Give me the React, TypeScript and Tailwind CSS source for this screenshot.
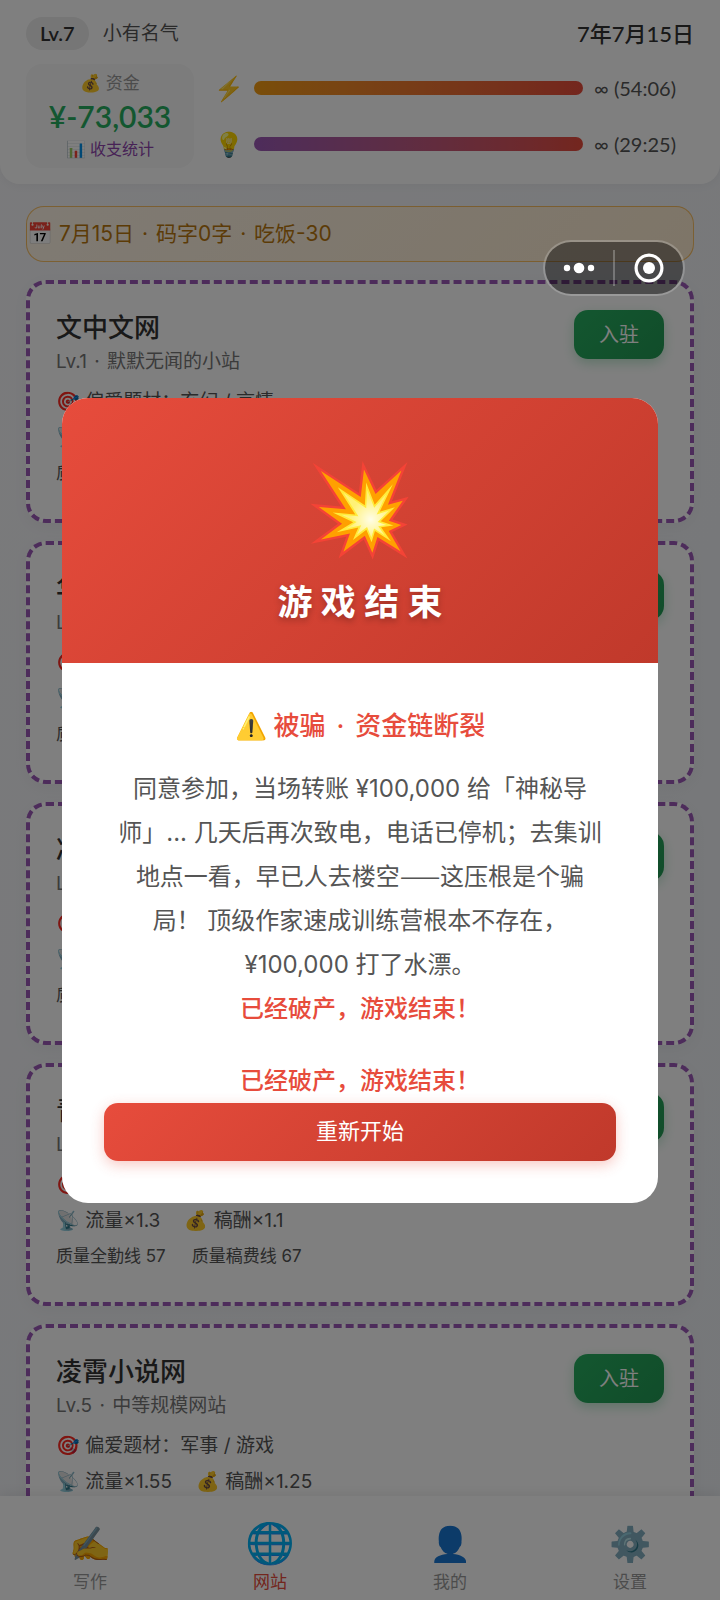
import React from 'react';

interface Site {
    id: number;
    name: string;
    level: number;
    description: string;
    genres: string;
    traffic: string;
    pay: string;
    attendanceLine: number;
    feeLine: number;
}

interface Gauge {
    id: string;
    icon: string;
    text: string;
    barClass: string;
}

interface NavItem {
    id: string;
    icon: string;
    label: string;
    iconClass: string;
}

const sites: Site[] = [
    { id: 1, name: '文中文网', level: 1, description: '默默无闻的小站', genres: '玄幻 / 言情', traffic: '1', pay: '1', attendanceLine: 50, feeLine: 60 },
    { id: 2, name: '华文书城', level: 2, description: '初具规模小站', genres: '都市 / 历史', traffic: '1.1', pay: '1', attendanceLine: 52, feeLine: 62 },
    { id: 3, name: '凌云书院', level: 3, description: '小型网站', genres: '仙侠 / 武侠', traffic: '1.2', pay: '1.05', attendanceLine: 55, feeLine: 65 },
    { id: 4, name: '青鸟书屋', level: 4, description: '小有名气网站', genres: '科幻 / 悬疑', traffic: '1.3', pay: '1.1', attendanceLine: 57, feeLine: 67 },
    { id: 5, name: '凌霄小说网', level: 5, description: '中等规模网站', genres: '军事 / 游戏', traffic: '1.55', pay: '1.25', attendanceLine: 60, feeLine: 70 },
];

const gauges: Gauge[] = [
    { id: 'energy', icon: '⚡', text: '∞ (54:06)', barClass: 'from-[#f39c12] to-[#e74c3c]' },
    { id: 'idea', icon: '💡', text: '∞ (29:25)', barClass: 'from-[#9b59b6] to-[#e74c3c]' },
];

const navItems: NavItem[] = [
    { id: 'write', icon: '✍️', label: '写作', iconClass: 'text-[34px]' },
    { id: 'sites', icon: '🌐', label: '网站', iconClass: 'text-[40px]' },
    { id: 'me', icon: '👤', label: '我的', iconClass: 'text-[34px]' },
    { id: 'settings', icon: '⚙️', label: '设置', iconClass: 'text-[34px]' },
];

const Dot: React.FC = () => <span className="mx-[2px]"> · </span>;

const StatusHeader: React.FC = () => (
    <header className="relative shrink-0 rounded-b-[20px] bg-white px-[26px] pt-[17px] pb-4 font-[Lato,'Noto_Sans_CJK_SC',sans-serif] shadow-[0_2px_10px_rgba(0,0,0,0.04)]">
        <div className="flex items-center justify-between">
            <div className="flex items-center gap-[14px]">
                <span className="rounded-full bg-[#ececec] px-[14px] text-[20px] leading-[33px] font-semibold text-[#333]">Lv.7</span>
                <span className="text-[19px] text-[#555]">小有名气</span>
            </div>
            <span className="text-[22px] leading-[33px] font-medium text-[#333]">7年7月15日</span>
        </div>
        <div className="mt-[14px] flex items-center">
            <div className="flex w-[168px] shrink-0 flex-col items-center rounded-[16px] bg-[#f8f8f8] py-[5px]">
                <span className="text-[17px] leading-7 text-[#999]">💰 资金</span>
                <span className="text-[30px] leading-[38px] font-semibold text-[#27ae60]">¥-73,033</span>
                <a href="#stats" className="text-[16px] leading-7 text-[#8e44ad]">📊 收支统计</a>
            </div>
            <div className="ml-5 flex flex-1 flex-col gap-7 pr-[18px]">
                {gauges.map(gauge => (
                    <div key={gauge.id} className="flex h-7 items-center">
                        <span className="w-10 text-[24px]">{gauge.icon}</span>
                        <div className={`h-[14px] flex-1 rounded-full bg-linear-to-r ${gauge.barClass}`} />
                        <span className="w-[93px] text-right text-[20px] text-[#555]">{gauge.text}</span>
                    </div>
                ))}
            </div>
        </div>
    </header>
);

const SiteCard: React.FC<{ site: Site }> = ({ site }) => (
    <article className="flex items-start justify-between rounded-[20px] border-4 border-dashed border-[#9b59b6] bg-white px-[26px] pt-[26px] pb-7 text-[#555] shadow-[0_4px_16px_rgba(0,0,0,0.04)]">
        <div>
            <h2 className="text-[26px] leading-9 font-medium text-[#333]">{site.name}</h2>
            <p className="mt-[2px] text-[19px] leading-7 text-[#777]">
                Lv.{site.level}
                <Dot />
                {site.description}
            </p>
            <div className="mt-2 text-[19px] leading-9">
                <p>🎯 偏爱题材：{site.genres}</p>
                <p className="flex gap-6">
                    <span>📡 流量×{site.traffic}</span>
                    <span>💰 稿酬×{site.pay}</span>
                </p>
            </div>
            <p className="flex gap-[26px] text-[17px] leading-[35px]">
                <span>质量全勤线 {site.attendanceLine}</span>
                <span>质量稿费线 {site.feeLine}</span>
            </p>
        </div>
        <button className="h-[49px] shrink-0 rounded-[14px] bg-linear-135 from-[#27ae60] to-[#229954] px-[25px] text-[20px] text-white shadow-[0_4px_12px_rgba(39,174,96,0.3)]">
            入驻
        </button>
    </article>
);

const BottomNav: React.FC = () => (
    <nav className="relative grid h-[104px] shrink-0 grid-cols-4 bg-white shadow-[0_-2px_12px_rgba(0,0,0,0.08)]">
        {navItems.map(item => (
            <button key={item.id} className="flex flex-col items-center pt-[23px]">
                <span className={`flex h-12 items-center ${item.iconClass}`}>{item.icon}</span>
                <span className={`text-[17px] leading-[30px] ${item.id === 'sites' ? 'text-[#e74c3c]' : 'text-[#999]'}`}>
                    {item.label}
                </span>
            </button>
        ))}
    </nav>
);

const GameOverDialog: React.FC = () => (
    <div className="fixed inset-0 flex items-center justify-center bg-black/50 px-[62px]">
        <div role="dialog" aria-modal="true" aria-labelledby="game-over-title" className="w-full rounded-[26px] bg-white text-center">
            <div className="rounded-t-[26px] bg-linear-135 from-[#e74c3c] to-[#c0392b] pt-[50px] pb-9 text-white">
                <div className="text-[88px] leading-[120px]">💥</div>
                <h1 id="game-over-title" className="mt-[10px] text-[35px] leading-[49px] font-bold text-shadow-[0_3px_6px_rgba(0,0,0,0.25)]">
                    游 戏 结 束
                </h1>
            </div>
            <div className="px-[42px] pt-[42px] pb-[42px]">
                <h2 className="text-[26px] leading-[42px] font-medium text-[#e74c3c]">
                    ⚠️ 被骗
                    <span className="mx-1"> · </span>
                    资金链断裂
                </h2>
                <div className="mt-5 text-[24px] leading-[44px] text-[#555]">
                    <p className="px-[10px]">
                        同意参加，当场转账 ¥100,000 给「神秘导师」... 几天后再次致电，电话已停机；去集训地点一看，早已人去楼空
                        <span className="font-['Noto_Sans_CJK_SC',sans-serif] leading-none">——</span>
                        这压根是个骗局！ 顶级作家速成训练营根本不存在，¥100,000 打了水漂。
                    </p>
                    <p className="font-medium text-[#e74c3c]">已经破产，游戏结束！</p>
                    <p className="mt-7 font-medium text-[#e74c3c]">已经破产，游戏结束！</p>
                </div>
                <button className="h-[58px] w-full rounded-[14px] bg-linear-135 from-[#e74c3c] to-[#c0392b] text-[22px] text-white shadow-[0_4px_14px_rgba(231,76,60,0.3)]">
                    重新开始
                </button>
            </div>
        </div>
    </div>
);

const Capsule: React.FC = () => (
    <div className="fixed top-60 right-[35px] flex h-14 w-[142px] items-center rounded-full border-2 border-white/20 bg-black/40 bg-clip-padding">
        <button aria-label="更多" className="flex flex-1 items-center justify-center">
            <svg width="32" height="12" viewBox="0 0 32 12" fill="white">
                <circle cx="4" cy="6" r="3.2" />
                <circle cx="16" cy="6" r="5.3" />
                <circle cx="28" cy="6" r="3.2" />
            </svg>
        </button>
        <span className="h-9 w-[2px] bg-white/25" />
        <button aria-label="关闭" className="flex flex-1 items-center justify-center">
            <svg width="30" height="30" viewBox="0 0 30 30">
                <circle cx="15" cy="15" r="12.9" fill="none" stroke="white" strokeWidth="3.2" />
                <circle cx="15" cy="15" r="6" fill="white" />
            </svg>
        </button>
    </div>
);

export default function App() {
    return (
        <div className="flex h-screen flex-col bg-linear-to-br from-[#f5f5f8] to-[#eceff3] font-[Inter,'Noto_Sans_CJK_SC',sans-serif]">
            <StatusHeader />
            <main className="flex min-h-0 flex-1 flex-col gap-[18px] overflow-y-auto px-[26px] pt-[22px] pb-6 [scrollbar-width:none]">
                <div className="shrink-0 rounded-[18px] border border-[#f39c12]/60 bg-linear-135 from-[#fef5e7] to-[#fdebd0] text-[21px] leading-[54px] text-[#b9770e]">
                    📅 7月15日
                    <Dot />
                    码字0字
                    <Dot />
                    吃饭-30
                </div>
                {sites.map(site => (
                    <SiteCard key={site.id} site={site} />
                ))}
            </main>
            <BottomNav />
            <GameOverDialog />
            <Capsule />
        </div>
    );
}
